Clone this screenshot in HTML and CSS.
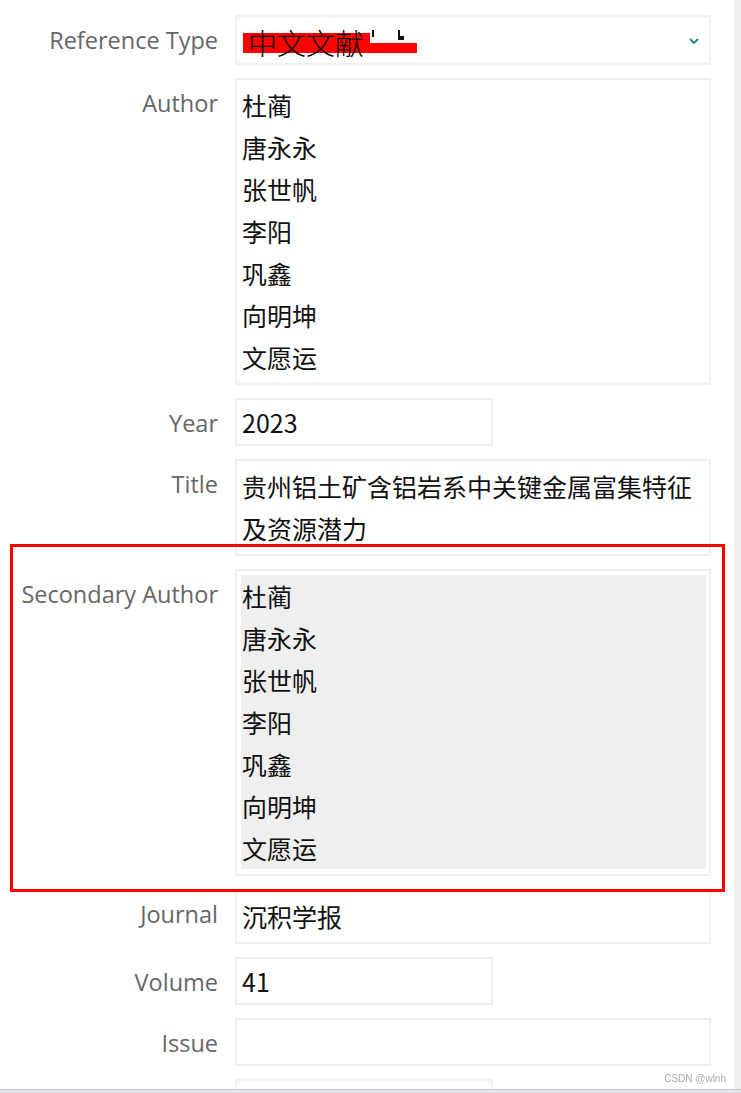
FILE: index.html
```html
<!DOCTYPE html>
<html lang="zh-CN">
<head>
  <meta charset="UTF-8" />
  <meta name="viewport" content="width=device-width, initial-scale=1.0"/>
  <title>Reference Editor</title>
  <link rel="stylesheet" href="styles.css">
</head>
<body>

<div class="page">
  <form class="ref-form">

    <!-- Reference Type -->
    <div class="row">
      <label class="lbl">Reference Type</label>
      <div class="field select">
        <svg class="scribble" width="180" height="24" viewBox="0 0 180 24">
          <path d="M0 3 H127 V13 H174 V23 H0 Z" fill="#ff0000"/>
          <rect x="129" y="0" width="2" height="7" fill="#111"/>
          <rect x="155" y="0" width="2" height="10" fill="#111"/>
          <rect x="157" y="6" width="4" height="4" fill="#111"/>
        </svg>
        <span class="type-text">中文文献</span>
        <svg class="chevron" width="10" height="6" viewBox="0 0 10 6">
          <polyline points="1,1 5,5 9,1" fill="none" stroke="#1b8a8c" stroke-width="1.8"/>
        </svg>
      </div>
    </div>

    <!-- Author -->
    <div class="row">
      <label class="lbl">Author</label>
      <div class="field area">
        <div>杜蔺</div>
        <div>唐永永</div>
        <div>张世帆</div>
        <div>李阳</div>
        <div>巩鑫</div>
        <div>向明坤</div>
        <div>文愿运</div>
      </div>
    </div>

    <div class="row">
      <label class="lbl">Year</label>
      <div class="field input short">2023</div>
    </div>

    <div class="row">
      <label class="lbl">Title</label>
      <div class="field area">贵州铝土矿含铝岩系中关键金属富集特征及资源潜力</div>
    </div>

    <!-- Secondary Author (read only, marked) -->
    <div class="row marked">
      <div class="highlight"></div>
      <label class="lbl">Secondary Author</label>
      <div class="field readonly">
        <div class="ro">
          <div>杜蔺</div>
          <div>唐永永</div>
          <div>张世帆</div>
          <div>李阳</div>
          <div>巩鑫</div>
          <div>向明坤</div>
          <div>文愿运</div>
        </div>
      </div>
    </div>

    <div class="row">
      <label class="lbl">Journal</label>
      <div class="field area">沉积学报</div>
    </div>

    <div class="row">
      <label class="lbl">Volume</label>
      <div class="field input short">41</div>
    </div>

    <div class="row">
      <label class="lbl">Issue</label>
      <div class="field input"></div>
    </div>

    <!-- next row, only its box top is in view -->
    <div class="row">
      <span class="lbl"></span>
      <div class="field input short"></div>
    </div>

  </form>
</div>

<div class="watermark">CSDN @wlnh</div>
<div class="taskbar"></div>

</body>
</html>
```

FILE: styles.css
```css
:root {
  --label: #666666;
  --line: #f0f0f0;
}

* {
  box-sizing: border-box;
}

body {
  margin: 0;
  background: #fff;
  font-family: 'Open Sans', sans-serif;
}

.page {
  width: 741px;
  min-height: 100vh;
  border-right: 7px solid #efefef;
}

.ref-form {
  display: flex;
  flex-direction: column;
  gap: 13px;
  padding-top: 15px;
}

.row {
  display: grid;
  grid-template-columns: 218px 476px;
  column-gap: 17px;
  align-items: start;
}

.lbl {
  text-align: right;
  font-size: 23.5px;
  line-height: 36px;
  padding-top: 7px;
  color: var(--label);
  white-space: nowrap;
}

.field {
  border: 2px solid var(--line);
  background: #fff;
  font-family: 'Noto Sans CJK SC', sans-serif;
  font-size: 25px;
  color: #111;
}

.field.input {
  height: 48px;
  padding: 4px 5px;
  line-height: 36px;
}

.field.short {
  width: 258px;
}

.field.area {
  padding: 4px 5px 5px;
  line-height: 42px;
}

/* select */
.select {
  position: relative;
  height: 50px;
  display: flex;
  align-items: center;
  justify-content: space-between;
  padding: 0 10px 0 11px;
}

.scribble {
  position: absolute;
  left: 6px;
  top: 13px;
}

.type-text {
  position: relative;
  font-size: 29px;
  font-weight: 300;
  color: #000;
  margin-top: 4px;
}

.chevron {
  margin-top: 1px;
}

/* read only block */
.field.readonly {
  padding: 4px 3px 5px 4px;
}

.ro {
  background: #efefef;
  padding-left: 1px;
  line-height: 42px;
}

.marked {
  position: relative;
}

.highlight {
  position: absolute;
  left: 10px;
  top: -25px;
  width: 715px;
  bottom: -16px;
  border: 3px solid #ff0000;
  z-index: 2;
  pointer-events: none;
}

.watermark {
  position: fixed;
  right: 15px;
  bottom: 8px;
  font-family: 'Liberation Sans', sans-serif;
  font-size: 10px;
  line-height: 12px;
  color: #ababab;
}

.taskbar {
  position: fixed;
  left: 0;
  right: 0;
  bottom: 0;
  height: 4px;
  border-top: 1px solid #c6c6c6;
  background: #dfe5ec;
}
```
